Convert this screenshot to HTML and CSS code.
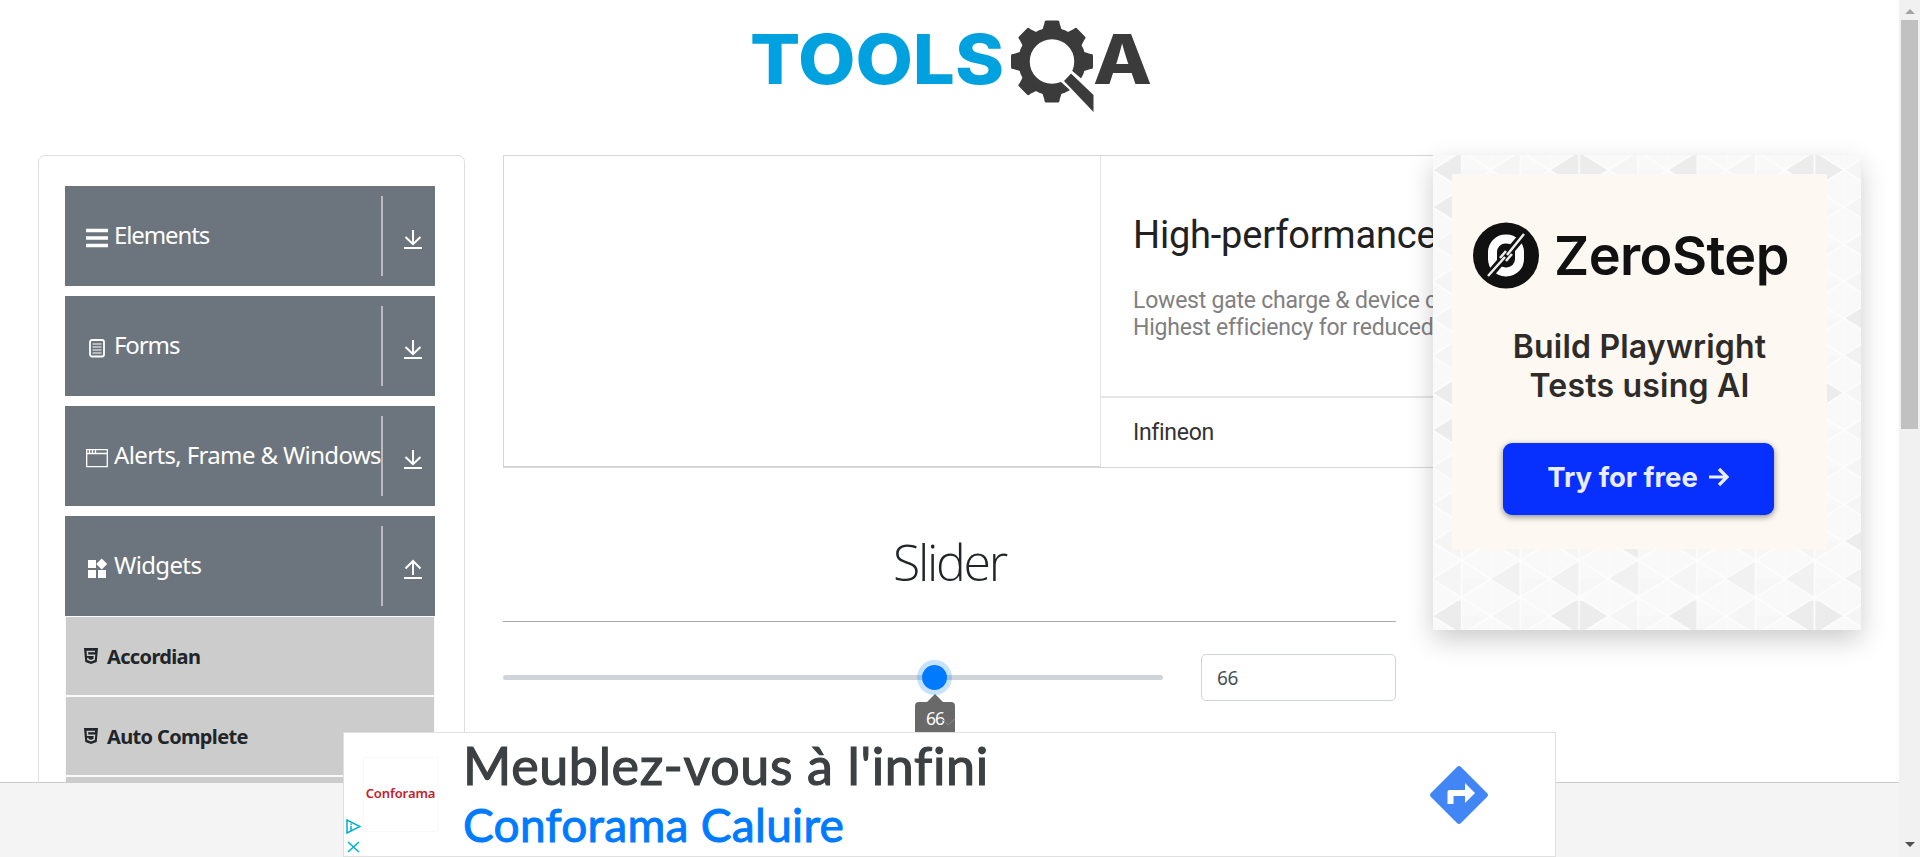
FILE: index.html
```html
<!DOCTYPE html>
<html lang="en">
<head>
<meta charset="utf-8">
<title>ToolsQA - Slider</title>
<link rel="stylesheet" href="styles.css">
</head>
<body>
<svg class="defs" width="0" height="0">
  <symbol id="down" viewBox="0 0 18 20"><path d="M9 1v14M1.500 8 9 15.200 16.500 8M0 19h18" fill="none" stroke="#fff" stroke-width="2"/></symbol>
  <symbol id="up" viewBox="0 0 18 20"><path d="M9 16V2M1.500 9.500 9 2l7.500 7.500M0 19h18" fill="none" stroke="#fff" stroke-width="2"/></symbol>
  <symbol id="html5" viewBox="0 0 14 16"><path d="M0 0h14l-1.300 14L7 16l-5.700-2z" fill="#212529"/><path d="M11 3.500H3.300l.3 3.800h6.900l-.4 4.200L7 12.600l-3.100-1.100-.1-1.700" fill="none" stroke="#ccc" stroke-width="1.500"/></symbol>
</svg>
<div class="window">
  <div class="page">
    <div class="view">
      <header class="header">
        <svg class="logo" width="410" height="120" viewBox="745 0 410 120">
          <text class="logo-tools" x="750" y="84" textLength="254" lengthAdjust="spacingAndGlyphs">TOOLS</text>
          <g fill="#3b3b3b">
            <circle cx="1052" cy="61.500" r="28" fill="none" stroke="#3b3b3b" stroke-width="11.500"/>
            <path id="tooth" d="M1042 31l2.500-8V22q0-1.500 2-1.500h11q2 0 2 1.500v1l2.500 8z"/>
            <use href="#tooth" transform="rotate(45 1052 61.500)"/>
            <use href="#tooth" transform="rotate(90 1052 61.500)"/>
            <use href="#tooth" transform="rotate(180 1052 61.500)"/>
            <use href="#tooth" transform="rotate(225 1052 61.500)"/>
            <use href="#tooth" transform="rotate(270 1052 61.500)"/>
            <use href="#tooth" transform="rotate(315 1052 61.500)"/>
            <path d="M1060 81l10-12 26 22v23z" fill="#fff"/>
            <path d="M1071 73.500 1093.500 95v17L1064 81z"/>
          </g>
          <text class="logo-a" x="1093" y="84" textLength="59" lengthAdjust="spacingAndGlyphs">A</text>
        </svg>
      </header>
      <div class="content">
        <aside class="sidebar">
          <div class="group">
            <svg width="22" height="20" viewBox="0 0 22 20"><path d="M0 2.500h22M0 10h22M0 17.500h22" stroke="#fff" stroke-width="3.500"/></svg>
            <span class="group-name">Elements</span><span class="toggle"><svg width="18" height="20"><use href="#down"/></svg></span>
          </div>
          <div class="group">
            <svg width="22" height="20" viewBox="0 0 22 20"><rect x="4" y="2" width="14" height="16.500" rx="2" fill="none" stroke="#fff" stroke-width="1.800"/><path d="M6.500 6h9M6.500 9h9M6.500 12h9M6.500 15h9" stroke="#fff"/></svg>
            <span class="group-name">Forms</span><span class="toggle"><svg width="18" height="20"><use href="#down"/></svg></span>
          </div>
          <div class="group">
            <svg width="22" height="20" viewBox="0 0 22 20"><path d="M.7 1.700h20.600v17H.7zM.7 5.500h20.600M3.500 2v3M6.500 2v3M9.500 2v3" fill="none" stroke="#fff" stroke-width="1.300"/></svg>
            <span class="group-name group-name-long">Alerts, Frame &amp; Windows</span><span class="toggle"><svg width="18" height="20"><use href="#down"/></svg></span>
          </div>
          <div class="group group-open">
            <svg width="22" height="20" viewBox="0 0 22 20"><path d="M2 2h8v8H2zM2 12h8v8H2zM12 12h8v8h-8zM15.700.5l5.500 5.500-5.500 5.500L10.200 6z" fill="#fff"/></svg>
            <span class="group-name group-name-long">Widgets</span><span class="toggle"><svg width="18" height="20"><use href="#up"/></svg></span>
          </div>
          <ul class="items">
            <li><svg width="14" height="16"><use href="#html5"/></svg><span>Accordian</span></li>
            <li><svg width="14" height="16"><use href="#html5"/></svg><span>Auto Complete</span></li>
            <li></li>
          </ul>
        </aside>
        <main class="main">
          <section class="banner">
            <div class="banner-media"></div>
            <div class="banner-text">
              <div class="banner-top">
                <h2>High-performance</h2>
                <p>Lowest gate charge &amp; device c<br>Highest efficiency for reduced</p>
              </div>
              <div class="banner-brand">Infineon</div>
            </div>
          </section>
          <h1>Slider</h1>
          <div class="slider-row">
            <div class="track"><div class="thumb"></div><div class="tip">66<svg width="14" height="8" viewBox="0 0 14 8"><path d="M0 1l6 6 7-6" fill="none" stroke="#8a8a8a"/></svg></div></div>
            <input class="value" value="66">
          </div>
        </main>
        <aside class="promo">
          <svg class="promo-bg" width="428" height="475">
            <defs>
              <pattern id="tri" width="58.860" height="37.170" patternUnits="userSpaceOnUse" patternTransform="translate(-1 15)">
                <path d="M0 0 29.430-18.600V18.600zM0 37.170 29.430 18.600V55.800z" fill="#f5f5f5"/>
                <path d="M58.860 0 29.430-18.600V18.600z" fill="#f7f7f7"/>
                <path d="M0 0 58.860 37.170M0 37.170 58.860 0M0 0V37.200M29.430 0V37.200" stroke="#fdfdfd" stroke-width="1.500"/>
              </pattern>
              <pattern id="dark" width="235.440" height="223" patternUnits="userSpaceOnUse">
                <path d="M1 15 28 -2V32zM1 52 28 35V69zM118 15l27-17V32zM174 15 147-2V32zM177 163l28-17v34z" fill="#ececec"/>
                <path d="M58 201l28-17v34zM177 200l28-17v34zM145 184l-27 17 27 17z" fill="#f1f1f1"/>
              </pattern>
            </defs>
            <rect width="428" height="475" fill="#f9f9f9"/><rect width="428" height="475" fill="url(#tri)"/><rect width="428" height="475" fill="url(#dark)"/>
          </svg>
          <div class="promo-card">
            <div class="promo-brand">
              <svg width="66" height="67" viewBox="0 0 66 67"><circle cx="33" cy="33.500" r="33" fill="#111"/><rect x="19.500" y="17" width="27" height="33" rx="13" fill="none" stroke="#fff" stroke-width="9"/><path d="M13 57 53 10" stroke="#111" stroke-width="8"/><path d="M15 54l17-19M34 33 51 12M27 36l6-7M33 39l6-7" stroke="#eee" stroke-width="2.500"/></svg>
              <span>ZeroStep</span>
            </div>
            <p>Build Playwright<br>Tests using AI</p>
            <div class="promo-button">Try for free <svg width="22" height="20" viewBox="0 0 22 20"><path d="M1 10h18M11 2l8 8-8 8" fill="none" stroke="#e9edff" stroke-width="3.200"/></svg></div>
          </div>
        </aside>
      </div>
    </div>
    <footer class="footer"></footer>
    <div class="bottom-ad">
      <div class="ad-brand">Conforama</div>
      <div class="ad-copy"><div class="ad-title">Meublez-vous à l'infini</div><div class="ad-place">Conforama Caluire</div></div>
      <svg class="ad-dir" width="60" height="60" viewBox="0 0 60 60"><path d="M28 2q2-2 4 0l26 26q2 2 0 4L32 58q-2 2-4 0L2 32q-2-2 0-4z" fill="#4285f4"/><path d="M18.500 39V27q0-2 2-2H36v-7l10 10-10 10v-7H24.500v8z" fill="#fff"/></svg>
      <svg class="ad-marks" width="15" height="34" viewBox="0 0 15 34"><path d="M1 1v13l13-6.500zM5 4.500v1.500M5 7v5M2 23l11 10M13 23 2 33" fill="none" stroke="#00aecd" stroke-width="1.500"/></svg>
    </div>
  </div>
  <div class="scrollbar"><i class="arrow-up"></i><div class="scroll-thumb"></div><i class="arrow-down"></i></div>
</div>
</body>
</html>
```
FILE: styles.css
```css
* { box-sizing: border-box; }
body { margin: 0; overflow: hidden; background: #fff; color: #212529; font-family: "Noto Sans", sans-serif; }
.defs { position: absolute; }
.window { display: flex; height: 857px; }
.page { position: relative; width: 1899px; height: 857px; overflow: hidden; }
.view { height: 782px; overflow: hidden; }
.header { height: 155px; padding-left: 745px; }
.logo { display: block; }
.logo text { font: 800 69px Inter, sans-serif; }
.logo .logo-tools { fill: #00a1df; }
.logo .logo-a { fill: #3b3b3b; }
.content { display: flex; align-items: flex-start; padding-left: 38px; }

.sidebar { flex: none; width: 427px; height: 700px; padding: 30px 29px 0 26px; border: 1px solid #dfdfdf; border-radius: 7px; }
.group { display: flex; align-items: center; width: 370px; height: 100px; margin-bottom: 10px; padding: 0 0 0 21px; background: #6c757d; color: #fff; }
.group > svg { flex: none; margin-top: 4px; }
.group-open { margin-bottom: 0; }
.group-name { flex: none; width: 275px; height: 80px; padding-left: 6px; border-right: 2px solid #bbb; font-size: 24px; line-height: 77px; letter-spacing: -1.1px; white-space: nowrap; }
.group-name-long { letter-spacing: -0.64px; }
.toggle { display: flex; flex: 1; padding: 6px 0 0 21px; }
.items { margin: 0; padding: 1px 1px 0; list-style: none; background: #f8f9fa; }
.items li { display: flex; height: 78px; margin-bottom: 2px; padding: 31px 0 0 18px; background: #ccc; font-size: 20px; font-weight: 700; line-height: 22px; letter-spacing: -0.65px; }
.items span { margin: -2px 0 0 9px; white-space: nowrap; }

.main { flex: none; width: 893px; margin-left: 38px; }
.banner { display: flex; width: 1100px; height: 313px; border: 1px solid #d6d6d6; font-family: Roboto, sans-serif; }
.banner-media { width: 597px; border-right: 1px solid #e4e4e4; border-bottom: 1px solid #d6d6d6; }
.banner-text { flex: 1; }
.banner-top { height: 242px; padding: 55px 0 0 32px; border-bottom: 2px solid #e6e6e6; }
.banner h2 { margin: 0; color: #212121; font-size: 38px; font-weight: 400; line-height: 48px; letter-spacing: -0.2px; white-space: nowrap; }
.banner p { margin: 28px 0 0; color: #808080; font-size: 23px; line-height: 27px; letter-spacing: -0.22px; white-space: nowrap; }
.banner-brand { padding: 19px 0 0 32px; color: #333; font-size: 23px; line-height: 32px; letter-spacing: -0.3px; }
.main h1 { height: 154px; margin: 0 0 32px; padding-top: 59px; border-bottom: 1px solid #aaa; font-family: "Open Sans", sans-serif; font-size: 50px; font-weight: 300; line-height: 70px; letter-spacing: -2.300px; text-align: center; }
.slider-row { display: flex; align-items: center; justify-content: space-between; }
.track { position: relative; width: 660px; height: 5px; border-radius: 3px; background: #ced4da; }
.thumb { position: absolute; left: 419px; top: -10px; width: 25px; height: 25px; border-radius: 50%; background: #007bff; box-shadow: 0 0 0 5px rgba(0,123,255,.22); }
.tip { position: absolute; left: 412px; top: 27px; width: 40px; height: 36px; border-radius: 4px; background: #696969; color: #fff; font-size: 17.500px; line-height: 33px; letter-spacing: -1px; text-align: center; }
.tip::before { content: ""; position: absolute; left: 12px; top: -8px; border: 8px solid transparent; border-top: 0; border-bottom-color: #696969; }
.tip svg { position: absolute; left: 27px; top: 16px; }
.value { width: 195px; height: 47px; padding: 1px 14px 0 15px; border: 1px solid #ced4da; border-radius: 5px; background: #fff; color: #495057; font-family: "Noto Sans", sans-serif; font-size: 19px; letter-spacing: -0.4px; }

.promo { position: relative; flex: none; width: 428px; height: 475px; margin-left: 37px; padding: 19px 0 0 19px; background: #f8f8f8; box-shadow: 0 10px 25px rgba(0,0,0,.2); }
.promo-bg { position: absolute; left: 0; top: 0; }
.promo-card { position: relative; width: 375px; height: 375px; padding-top: 48px; background: #fdf8f2; color: #111; font-family: Inter, sans-serif; }
.promo-brand { display: flex; align-items: center; height: 67px; padding-left: 21px; font-size: 54px; font-weight: 600; letter-spacing: -0.6px; }
.promo-brand span { padding-left: 15px; }
.promo-card p { margin: 38px 0 0; color: #2e2b29; font-size: 32px; font-weight: 600; line-height: 39px; letter-spacing: 0.2px; text-align: center; }
.promo-button { display: flex; align-items: center; justify-content: center; gap: 10px; width: 271px; height: 72px; margin: 38px 0 0 51px; padding-bottom: 5px; border-radius: 9px; background: #0730ff; color: #e9edff; font-size: 27.500px; font-weight: 700; box-shadow: 0 2px 6px rgba(0,0,0,.45); }

.footer { height: 75px; border-top: 1px solid #ccc; background: #f4f4f4; }
.bottom-ad { position: absolute; left: 343px; top: 732px; display: flex; align-items: center; width: 1213px; height: 125px; border: 1px solid #e0e0e0; background: #fff; }
.ad-brand { flex: none; width: 75px; height: 75px; margin-left: 19px; border: 1px solid #f9f9f9; color: #c4202b; font-size: 13px; font-weight: 600; line-height: 71px; letter-spacing: -0.1px; text-align: center; }
.ad-copy { flex: none; width: 991px; padding-left: 25px; font-family: Lato, sans-serif; white-space: nowrap; }
.ad-title { color: #3c4043; font-size: 52px; line-height: 60px; letter-spacing: 0.65px; -webkit-text-stroke: 1.200px #3c4043; }
.ad-place { color: #007bff; font-size: 46px; line-height: 60px; letter-spacing: 0.3px; -webkit-text-stroke: 1px #007bff; }
.ad-marks { position: absolute; left: 2px; top: 86px; }

.scrollbar { display: flex; flex-direction: column; align-items: center; width: 21px; height: 857px; padding: 9px 0 10px; background: #f1f1f1; }
.arrow-up { border: 5px solid transparent; border-top: 0; border-bottom-color: #a3a3a3; }
.scroll-thumb { width: 17px; height: 409px; margin: 6px 0 auto; background: #c1c1c1; }
.arrow-down { border: 5px solid transparent; border-bottom: 0; border-top-color: #505050; }
```
